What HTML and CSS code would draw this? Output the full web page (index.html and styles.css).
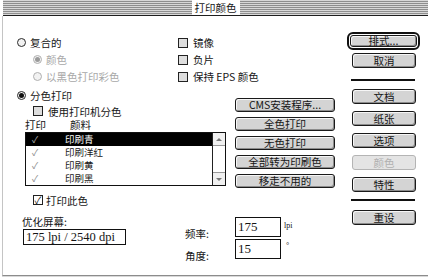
FILE: index.html
```html
<!DOCTYPE html>
<html lang="zh">
<head>
    <meta charset="UTF-8">
    <meta name="viewport" content="width=device-width, initial-scale=1.0">
    <title>打印颜色</title>
    <link rel="stylesheet" href="styles.css">
</head>
<body>
    <div class="titlebar"><span class="title">打印颜色</span></div>

    <div class="dialog">
        <div class="main">
            <!-- composite / output options -->
            <div class="top">
                <div class="radios">
                    <div class="opt"><span class="radio"></span>复合的</div>
                    <div class="opt sub off"><span class="radio on"></span>颜色</div>
                    <div class="opt sub off"><span class="radio"></span>以黑色打印彩色</div>
                </div>
                <div class="checks">
                    <div class="opt"><span class="box"></span>镜像</div>
                    <div class="opt"><span class="box"></span>负片</div>
                    <div class="opt"><span class="box"></span>保持 EPS 颜色</div>
                </div>
            </div>

            <!-- separations -->
            <div class="middle">
                <div class="seps">
                    <div class="opt"><span class="radio on"></span>分色打印</div>
                    <div class="opt sub"><span class="box"></span>使用打印机分色</div>
                    <div class="list-head"><span class="col-print">打印</span><span>颜料</span></div>
                    <div class="list">
                        <div class="rows">
                            <div class="row sel"><span class="tick">✓</span>印刷青</div>
                            <div class="row"><span class="tick">✓</span>印刷洋红</div>
                            <div class="row"><span class="tick">✓</span>印刷黄</div>
                            <div class="row"><span class="tick">✓</span>印刷黑</div>
                        </div>
                        <div class="scroll">
                            <span class="arrow up"></span>
                            <span class="track"></span>
                            <span class="arrow down"></span>
                        </div>
                    </div>
                </div>
                <div class="actions">
                    <div class="btn">CMS安装程序...</div>
                    <div class="btn">全色打印</div>
                    <div class="btn">无色打印</div>
                    <div class="btn">全部转为印刷色</div>
                    <div class="btn">移走不用的</div>
                </div>
            </div>

            <!-- screens -->
            <div class="bottom">
                <div class="screen">
                    <div class="opt sub"><span class="box checked">✓</span>打印此色</div>
                    <div class="screen-label">优化屏幕:</div>
                    <div class="field wide">175 lpi / 2540 dpi</div>
                </div>
                <div class="freq">
                    <div class="freq-row">
                        <span class="freq-label">频率:</span>
                        <span class="field">175</span>
                        <span class="unit">lpi</span>
                    </div>
                    <div class="freq-row">
                        <span class="freq-label">角度:</span>
                        <span class="field">15</span>
                        <span class="unit deg">°</span>
                    </div>
                </div>
            </div>
        </div>

        <div class="side">
            <div class="default"><div class="btn">排式...</div></div>
            <div class="btn cancel">取消</div>
            <div class="rule"></div>
            <div class="btn first">文档</div>
            <div class="btn">纸张</div>
            <div class="btn">选项</div>
            <div class="btn disabled">颜色</div>
            <div class="btn">特性</div>
            <div class="rule low"></div>
            <div class="btn reset">重设</div>
        </div>
    </div>
</body>
</html>
```

FILE: styles.css
```css
body {
    margin: 0;
    width: 428px;
    height: 278px;
    overflow: hidden;
    background-color: #fff;
    color: #151515;
    font-family: "Noto Sans CJK SC", "Noto Sans", sans-serif;
    font-size: 10.5px;
}
.titlebar {
    height: 15px;
    border-bottom: 1px solid #1e1e1e;
    margin-left: 3px;
    background: repeating-linear-gradient(to bottom, #d8d8d8 0, #d8d8d8 1px, #8e8e8e 1px, #8e8e8e 2px);
    display: flex;
    justify-content: center;
    align-items: center;
}
.title {
    background-color: #fff;
    padding: 0 3px;
    line-height: 15px;
    font-size: 10.5px;
}
.dialog {
    display: flex;
    height: 259px;
    margin-left: 2px;
    border-left: 1px solid #c4c4c4;
    border-bottom: 1px solid #8c8c8c;
    box-shadow: 0 1px 0 #d8d8d8;
}
.main {
    width: 330px;
    padding: 18px 0 0 14px;
}

/* options */
.opt {
    display: flex;
    align-items: center;
    height: 17px;
    white-space: nowrap;
}
.opt.sub {
    margin-left: 16px;
}
.opt.off {
    color: #a8a8a8;
}
.radio {
    width: 9px;
    height: 9px;
    border: 1px solid #2a2a2a;
    border-radius: 50%;
    background-color: #f2f2f2;
    margin-right: 4px;
    display: flex;
    align-items: center;
    justify-content: center;
    box-sizing: border-box;
}
.radio.on::after {
    content: "";
    width: 5px;
    height: 5px;
    border-radius: 50%;
    background-color: #111;
}
.off .radio {
    border-color: #b0b0b0;
}
.off .radio.on::after {
    background-color: #9a9a9a;
}
.box {
    width: 10px;
    height: 10px;
    box-sizing: border-box;
    border: 1px solid #222;
    background-color: #dedede;
    margin-right: 5px;
    font-size: 10px;
    line-height: 8px;
    text-align: center;
    color: #111;
}
.box.checked {
    background-color: #fff;
    margin-right: 3px;
}

.top {
    display: flex;
}
.radios {
    width: 161px;
}

/* separations */
.middle {
    display: flex;
    margin-top: 2px;
}
.seps {
    width: 209px;
}
.seps .opt {
    height: 16px;
}
.list-head {
    display: flex;
    margin-left: 8px;
    height: 12px;
    line-height: 12px;
}
.col-print {
    width: 45px;
}
.list {
    display: flex;
    width: 201px;
    margin: 1px 0 0 8px;
    border: 1px solid #111;
    box-sizing: border-box;
}
.rows {
    flex: 1;
}
.row {
    height: 13px;
    line-height: 13px;
    padding-left: 6px;
    display: flex;
    font-size: 9.5px;
    overflow: hidden;
}
.row.sel {
    background-color: #000;
    color: #fff;
}
.tick {
    width: 33px;
    color: #8a8a8a;
    font-size: 9px;
}
.sel .tick {
    color: #b0b0b0;
}
.scroll {
    width: 12px;
    border-left: 1px solid #222;
    display: flex;
    flex-direction: column;
}
.arrow {
    height: 12px;
    background-color: #f0f0f0;
    display: flex;
    align-items: center;
    justify-content: center;
}
.arrow.up {
    border-bottom: 1px solid #999;
}
.arrow.down {
    border-top: 1px solid #999;
}
.arrow::after {
    content: "";
    border-left: 3px solid transparent;
    border-right: 3px solid transparent;
}
.arrow.up::after {
    border-bottom: 3px solid #777;
}
.arrow.down::after {
    border-top: 3px solid #777;
}
.track {
    flex: 1;
    background-color: #fff;
}

/* buttons */
.btn {
    height: 14px;
    box-sizing: border-box;
    border: 1px solid #1a1a1a;
    border-radius: 3px;
    background-color: #d4d4d4;
    box-shadow: inset 1px 1px 0 #f6f6f6, inset -1px -1px 0 #8c8c8c;
    text-align: center;
    line-height: 12px;
    white-space: nowrap;
}
.btn.disabled {
    border-color: #b4b4b4;
    color: #b0b0b0;
    background-color: #e4e4e4;
    box-shadow: none;
}
.actions {
    width: 100px;
    margin-left: 9px;
    padding-top: 11px;
    display: flex;
    flex-direction: column;
    gap: 5px;
}

/* screens */
.bottom {
    display: flex;
    margin-top: 4px;
}
.screen {
    width: 168px;
}
.screen .opt {
    height: 16px;
}
.screen-label {
    margin: 7px 0 0 5px;
    line-height: 14px;
}
.field {
    display: block;
    box-sizing: border-box;
    border: 1px solid #111;
    background-color: #fff;
    font-family: "Liberation Serif", serif;
    font-size: 13px;
    padding-left: 2px;
}
.field.wide {
    width: 103px;
    height: 16px;
    line-height: 14px;
    margin-left: 6px;
    font-size: 12.5px;
}
.freq {
    padding-top: 25px;
}
.freq-row {
    display: flex;
    align-items: flex-start;
}
.freq-row + .freq-row {
    margin-top: -1px;
}
.freq-label {
    width: 50px;
    padding-top: 11px;
    line-height: 12px;
}
.freq .field {
    width: 46px;
    height: 20px;
    line-height: 18px;
}
.unit {
    margin-left: 3px;
    padding-top: 5px;
    font-family: "Liberation Serif", serif;
    font-size: 8px;
    line-height: 8px;
}
.unit.deg {
    margin-left: 5px;
    padding-top: 3px;
}

/* side column */
.side {
    width: 73px;
    padding-top: 16px;
    display: flex;
    flex-direction: column;
}
.side .btn {
    height: 15px;
    line-height: 13px;
    margin: 8px 4px 0 5px;
}
.default {
    height: 18px;
    box-sizing: border-box;
    border: 2px solid #111;
    border-radius: 6px;
    padding: 1px;
}
.side .default .btn {
    height: 12px;
    line-height: 10px;
    margin: 0;
}
.rule {
    height: 2px;
    background-color: #111;
    margin: 11px 5px 0 4px;
}
.rule.low {
    margin-top: 7px;
}
.side .btn.first {
    margin-top: 8px;
}
.side .btn + .btn {
    margin-top: 7px;
}
.side .btn.cancel {
    margin-top: 3px;
}
.side .btn.reset {
    margin-top: 9px;
}
```
